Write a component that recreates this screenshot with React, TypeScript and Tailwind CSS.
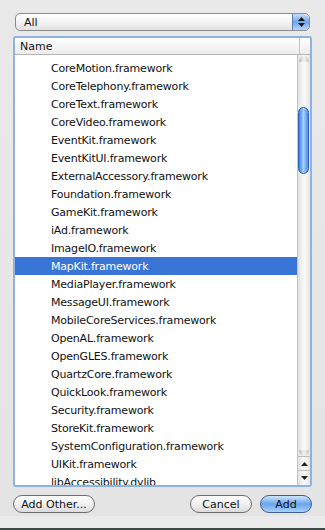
const rows = [
  "CoreMotion.framework",
  "CoreTelephony.framework",
  "CoreText.framework",
  "CoreVideo.framework",
  "EventKit.framework",
  "EventKitUI.framework",
  "ExternalAccessory.framework",
  "Foundation.framework",
  "GameKit.framework",
  "iAd.framework",
  "ImageIO.framework",
  "MapKit.framework",
  "MediaPlayer.framework",
  "MessageUI.framework",
  "MobileCoreServices.framework",
  "OpenAL.framework",
  "OpenGLES.framework",
  "QuartzCore.framework",
  "QuickLook.framework",
  "Security.framework",
  "StoreKit.framework",
  "SystemConfiguration.framework",
  "UIKit.framework",
  "libAccessibility.dylib",
];

const selected = "MapKit.framework";

function Stepper() {
  return (
    <div className="w-[17px] h-full rounded-r-[5px] border-l border-[#5a7fb8] bg-gradient-to-b from-[#c9defa] via-[#6fa6ee] to-[#b8d6fb] flex flex-col items-center justify-center gap-[2px]">
      <svg width="7" height="4" viewBox="0 0 7 4">
        <path d="M3.5 0 L7 4 L0 4 Z" fill="#1a1a1a" />
      </svg>
      <svg width="7" height="4" viewBox="0 0 7 4">
        <path d="M0 0 L7 0 L3.5 4 Z" fill="#1a1a1a" />
      </svg>
    </div>
  );
}

function Scrollbar() {
  return (
    <div className="w-[13px] h-full border-l border-[#c4c4c4] bg-gradient-to-r from-[#e2e2e2] via-[#fafafa] to-[#e6e6e6] flex flex-col">
      <div className="flex-1 relative">
        <div className="absolute left-[1px] right-[1px] top-[1px] h-[6px] rounded-t-full bg-gradient-to-r from-[#bdbdbd] via-[#f4f4f4] to-[#c8c8c8]" />
        <div className="absolute left-0 right-[1px] top-[52px] h-[67px] rounded-full border border-[#2d63b8] bg-gradient-to-r from-[#3d7fe0] via-[#a9d0fb] to-[#4a8ae3]" />
        <div className="absolute left-[1px] right-[1px] bottom-0 h-[6px] rounded-b-full bg-gradient-to-r from-[#bdbdbd] via-[#f4f4f4] to-[#c8c8c8]" />
      </div>
      <div className="h-[14px] border-t border-[#bdbdbd] flex items-center justify-center">
        <svg width="7" height="4" viewBox="0 0 7 4">
          <path d="M3.5 0 L7 4 L0 4 Z" fill="#222" />
        </svg>
      </div>
      <div className="h-[15px] border-t border-[#bdbdbd] flex items-center justify-center">
        <svg width="7" height="4" viewBox="0 0 7 4">
          <path d="M0 0 L7 0 L3.5 4 Z" fill="#222" />
        </svg>
      </div>
    </div>
  );
}

export default function App() {
  return (
    <div
      className="w-[325px] h-[530px] bg-gradient-to-b from-[#e9e9e9] to-[#e4e4e4] flex flex-col text-[#111] overflow-hidden"
      style={{ fontFamily: '"DejaVu Sans", Verdana, sans-serif' }}
    >
      <div className="px-[15px] pt-[13px]">
        <div className="h-[18px] rounded-[5px] border border-[#8c8c8c] bg-gradient-to-b from-[#ffffff] via-[#f3f3f3] to-[#e2e2e2] flex items-center overflow-hidden">
          <span className="flex-1 pl-[8px] text-[11px] leading-none">All</span>
          <Stepper />
        </div>
      </div>

      <div className="mx-[13px] mt-[5px] h-[451px] rounded-[3px] border-2 border-[#8fb2e2] bg-white flex flex-col overflow-hidden">
        <div className="h-[17px] shrink-0 border-b border-[#b5b5b5] bg-gradient-to-b from-[#ffffff] to-[#ececec] flex">
          <div className="w-[284px] flex items-center pl-[5px] text-[11px] leading-none">Name</div>
          <div className="w-[1px] bg-[#c4c4c4]" />
          <div className="flex-1" />
        </div>
        <div className="flex flex-1 min-h-0">
          <div className="w-[284px] overflow-hidden pt-[4px] tracking-[-0.2px]">
            {rows.map((r) => (
              <div
                key={r}
                className={
                  r === selected
                    ? "h-[18px] flex items-center pl-[36px] text-[11px] leading-none whitespace-nowrap bg-[#3875d7] text-white"
                    : "h-[18px] flex items-center pl-[36px] text-[11px] leading-none whitespace-nowrap"
                }
              >
                {r}
              </div>
            ))}
          </div>
          <Scrollbar />
        </div>
      </div>

      <div className="mt-[8px] px-[13px] flex items-center text-[11px]">
        <button className="w-[82px] h-[18px] rounded-full border border-[#6e6e6e] bg-gradient-to-b from-[#ffffff] via-[#f1f1f1] to-[#dcdcdc] leading-none">
          Add Other...
        </button>
        <div className="flex-1" />
        <button className="w-[62px] h-[18px] rounded-full border border-[#6e6e6e] bg-gradient-to-b from-[#ffffff] via-[#f1f1f1] to-[#dcdcdc] leading-none">
          Cancel
        </button>
        <button className="ml-[8px] w-[52px] h-[18px] rounded-full border border-[#3b5f93] bg-gradient-to-b from-[#cfe4fc] via-[#6aa4ec] to-[#a9d2fb] leading-none">
          Add
        </button>
      </div>

      <div className="flex-1" />
      <div className="h-[12px] bg-[#ebebeb]" />
      <div className="h-[2px] bg-[#3f4a48]" />
    </div>
  );
}
